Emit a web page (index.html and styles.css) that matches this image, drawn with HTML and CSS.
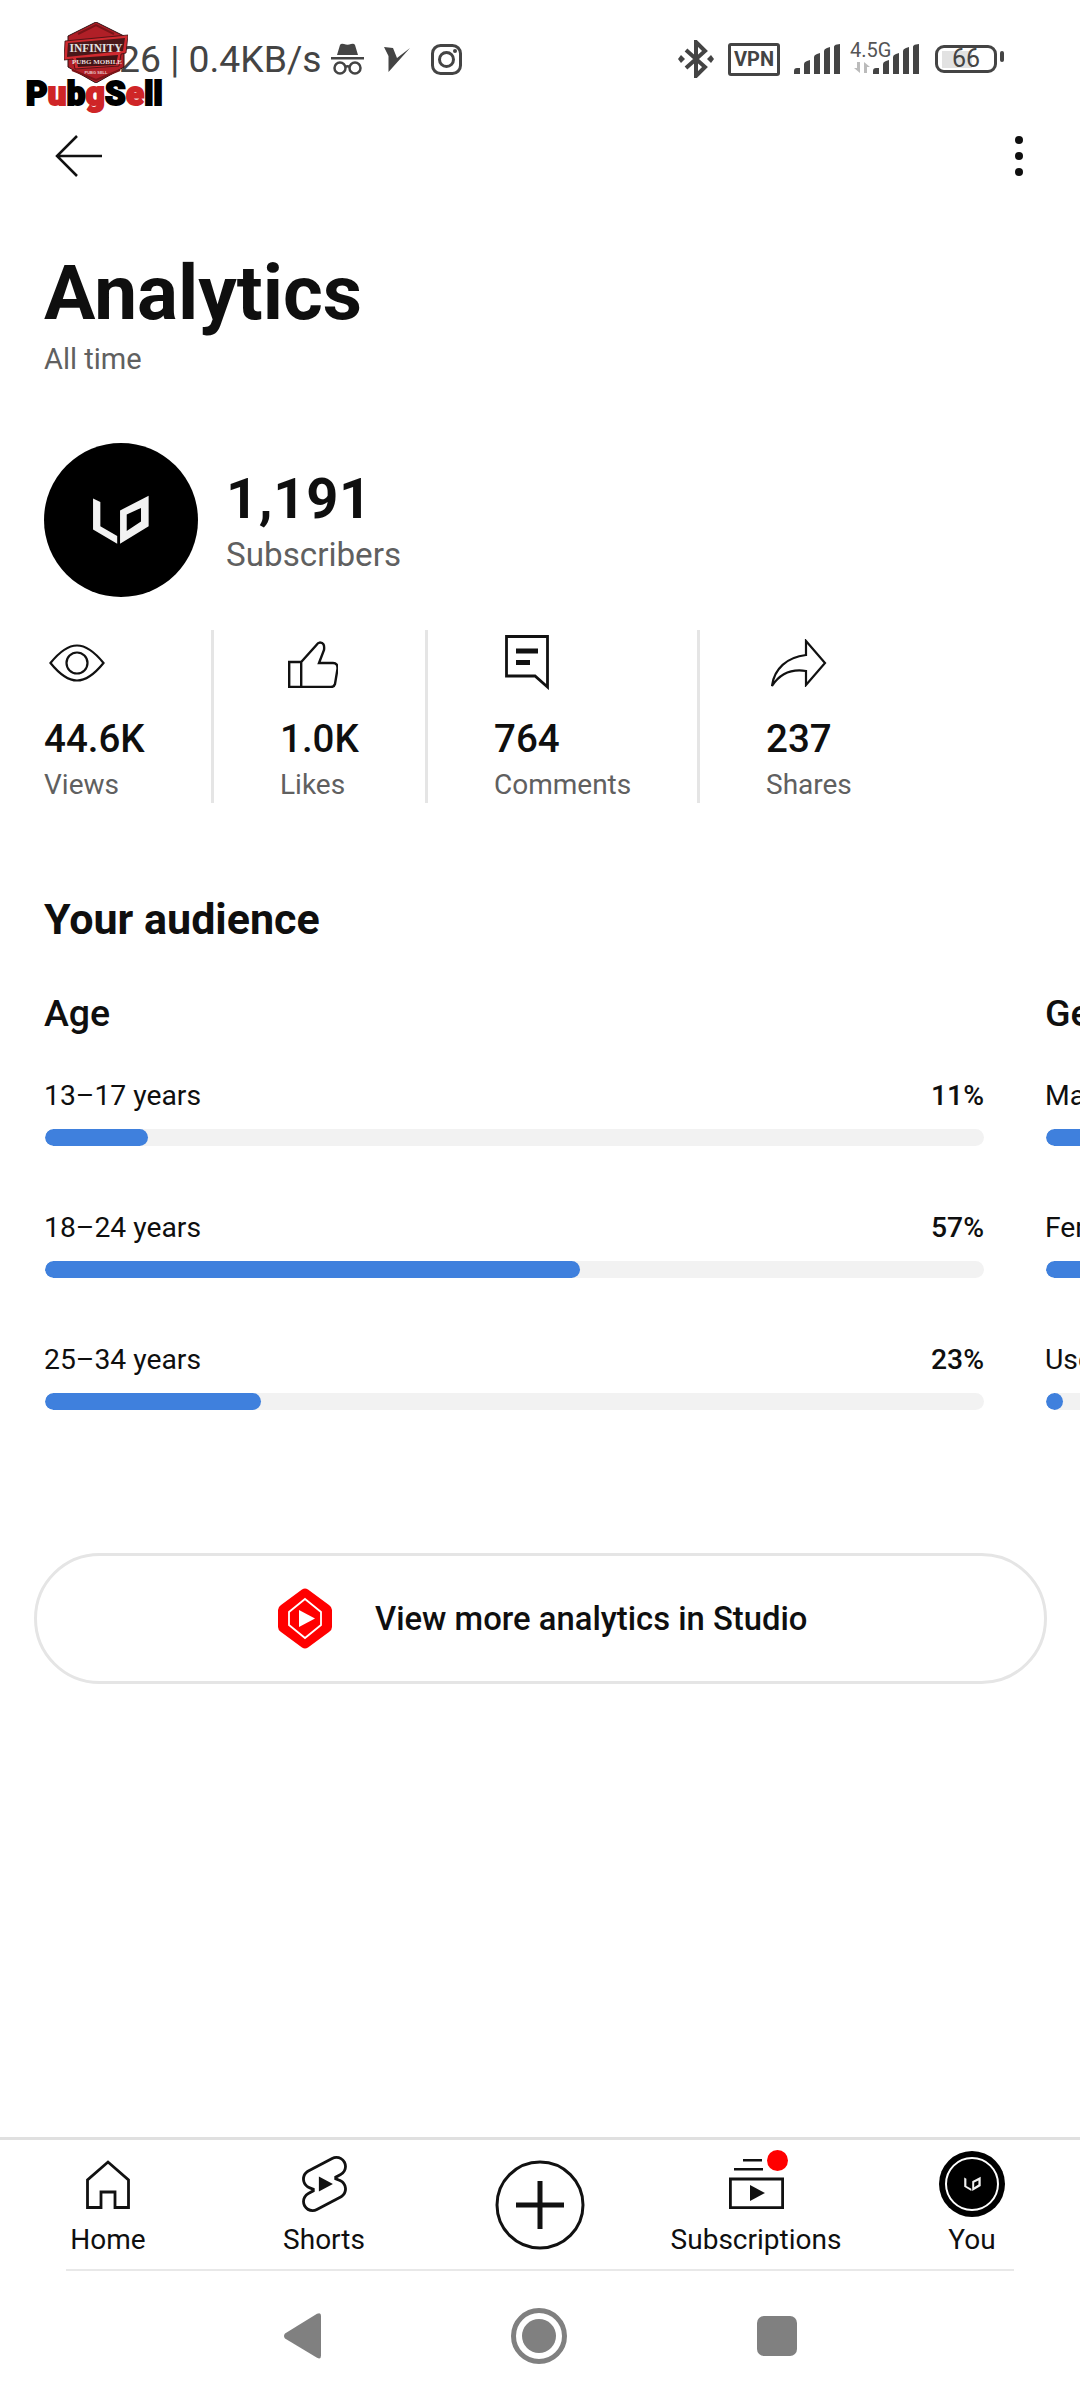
FILE: index.html
```html
<!DOCTYPE html>
<html lang="en">
<head>
<meta charset="utf-8">
<title>Analytics</title>
<link rel="stylesheet" href="styles.css">
</head>
<body>
<svg class="defs" width="0" height="0" aria-hidden="true">
  <symbol id="lo" viewBox="270 215 200 170">
    <path fill="#f2f2f2" fill-rule="evenodd" d="M282 232l23 11v77l53 30v25l-76-45zM457 224v96l-90 55V270zM433 262l-45 21v52l45-30z"/>
  </symbol>
  <symbol id="bars" viewBox="0 0 48 30">
    <path d="M0 30v-3q0-3 3-3h3v6zM10 30V20q0-2 3-3l3-1v14zM20 30V13q0-2 3-3l3-1v21zM30 30V7q0-2 3-3l3-1v27zM40 30V3q0-2 3-2.500l3-.5v30z" fill="#444"/>
  </symbol>
</svg>

<div class="watermark">
  <svg class="wm-hex" viewBox="0 0 64 61" width="64" height="61">
    <polygon points="32,0 60,14 60,45 32,61 4,45 4,14" fill="#b01f27" stroke="#2e1012"/>
    <path d="M14 12L32 3l18 9M8 48l24 10 24-10" fill="none" stroke="#7a1418" stroke-width="2"/>
    <polygon points="1,19 64,13 62,31 57,32 55,44 11,47 9,37 0,38" fill="#d02a30" stroke="#3a1012" stroke-width=".8"/>
    <polygon points="4,21 61,16 59,29 3,35" fill="#4a1719"/>
    <polygon points="12,36 54,33 52,43 14,45" fill="#421315"/>
    <text class="wm-title" x="32" y="30" text-anchor="middle">INFINITY</text>
    <text class="wm-sub" x="33" y="42" text-anchor="middle">PUBG MOBILE</text>
    <text class="wm-tiny" x="32" y="52" text-anchor="middle">PUBG SELL</text>
  </svg>
  <div class="wm-name"><span>P</span><span class="wm-red">u</span><span>b</span><span class="wm-red">g</span><span>S</span><span class="wm-red">e</span><span>ll</span></div>
</div>

<header class="status">
  <span class="status-text">26 | 0.4KB/s</span>
  <svg class="st-incog" width="33" height="32" viewBox="0 0 33 32"><path fill="#444" d="M6 12L9 2q1-2 4-1 3.500 1.500 7 0 3-1 4 1l3 10z"/><rect y="14" width="33" height="2.500" fill="#444"/><g fill="none" stroke="#444" stroke-width="2.500"><circle cx="9" cy="25" r="5.500"/><circle cx="24" cy="25" r="5.500"/><path d="M14 24q2.500-1.500 5 0"/></g></svg>
  <svg class="st-v" width="26" height="25" viewBox="0 0 26 25"><path fill="#444" d="M0 0l9 1 4 10L26 1 4.500 25V9z"/></svg>
  <svg class="st-ig" width="31" height="31" viewBox="0 0 31 31"><g fill="none" stroke="#444" stroke-width="3"><rect x="1.500" y="1.500" width="28" height="28" rx="8"/><circle cx="15.500" cy="15.500" r="7"/></g><circle cx="24" cy="7" r="2" fill="#444"/></svg>
  <div class="status-right">
    <svg width="36" height="38" viewBox="0 0 36 38"><path fill="none" stroke="#444" stroke-width="4" d="M8 10l19 17-9 9V2l9 9L8 28"/><path fill="#444" d="M3 15l4 4-4 4-3-4zM33 15l3 4-3 4-4-4z"/></svg>
    <span class="vpn">VPN</span>
    <svg class="signal" width="48" height="30"><use href="#bars"/></svg>
    <div class="net">
      <span class="net-label">4.5G</span>
      <svg class="net-arrows" width="16" height="11" viewBox="0 0 16 11"><path fill="#bbb" d="M3 0h3v11L0 6h3zM10 0l6 5h-3v6h-3z"/></svg>
      <svg class="signal" width="48" height="30"><use href="#bars"/></svg>
    </div>
    <span class="battery">66</span>
  </div>
</header>

<div class="toolbar">
  <svg width="47" height="42" viewBox="0 0 47 42"><path fill="none" stroke="#111" stroke-width="2.500" d="M47 21H2M22 1L2 21l20 20"/></svg>
  <div class="kebab"><i></i><i></i><i></i></div>
</div>

<main class="main">
  <h1 class="title">Analytics</h1>
  <p class="range">All time</p>

  <section class="channel">
    <div class="avatar"><svg width="64" height="54"><use href="#lo"/></svg></div>
    <div class="subs">
      <div class="subs-count">1,191</div>
      <div class="subs-label">Subscribers</div>
    </div>
  </section>

  <section class="stats">
    <div class="stat">
      <div class="stat-icon"><svg class="i-eye" width="56" height="38" viewBox="0 0 56 38"><path fill="none" stroke="#111" stroke-width="2.200" d="M1.500 19C12 6 20 1.500 28 1.500S44 6 54.500 19C44 32 36 36.500 28 36.500S12 32 1.500 19z"/><circle cx="28" cy="19" r="10.500" fill="none" stroke="#111" stroke-width="2.200"/></svg></div>
      <div class="stat-num">44.6K</div>
      <div class="stat-label">Views</div>
    </div>
    <div class="stat">
      <div class="stat-icon"><svg class="i-thumb" width="50" height="47" viewBox="0 0 50 47"><path fill="none" stroke="#111" stroke-width="2.400" d="M1.200 21h12v25H1.200zM13.200 46H43q3 0 4-3l2.500-15q.5-6-4.500-6H31l5-13q1-7.500-4-7.500-2 0-4 3L13.200 21"/></svg></div>
      <div class="stat-num">1.0K</div>
      <div class="stat-label">Likes</div>
    </div>
    <div class="stat">
      <div class="stat-icon"><svg class="i-comment" width="44" height="55" viewBox="0 0 44 55"><path fill="none" stroke="#111" stroke-width="2.800" d="M1.500 1.500h41V52L30 41H1.500z"/><path fill="#111" d="M11 13.500h22v5H11zM11 25h14v5H11z"/></svg></div>
      <div class="stat-num">764</div>
      <div class="stat-label">Comments</div>
    </div>
    <div class="stat">
      <div class="stat-icon"><svg class="i-share" width="56" height="48" viewBox="0 0 56 48"><path fill="none" stroke="#111" stroke-width="2.200" d="M35 2l19 22-19 22V32C22 30 10 33 1 47 3 30 16 18 35 16z"/></svg></div>
      <div class="stat-num">237</div>
      <div class="stat-label">Shares</div>
    </div>
  </section>

  <h2 class="audience">Your audience</h2>

  <section class="carousel">
    <div class="col">
      <h3 class="col-title">Age</h3>
      <div class="row">
        <div class="row-head"><span>13–17 years</span><span class="pct">11%</span></div>
        <div class="track"><div class="fill" style="width:11%"></div></div>
      </div>
      <div class="row">
        <div class="row-head"><span>18–24 years</span><span class="pct">57%</span></div>
        <div class="track"><div class="fill" style="width:57%"></div></div>
      </div>
      <div class="row">
        <div class="row-head"><span>25–34 years</span><span class="pct">23%</span></div>
        <div class="track"><div class="fill" style="width:23%"></div></div>
      </div>
    </div>
    <div class="col">
      <h3 class="col-title">Gender</h3>
      <div class="row">
        <div class="row-head"><span>Male</span></div>
        <div class="track"><div class="fill" style="width:87%"></div></div>
      </div>
      <div class="row">
        <div class="row-head"><span>Female</span></div>
        <div class="track"><div class="fill" style="width:13%"></div></div>
      </div>
      <div class="row">
        <div class="row-head"><span>User-specified</span></div>
        <div class="track"><div class="fill" style="width:17px"></div></div>
      </div>
    </div>
  </section>

  <a class="studio">
    <svg width="54" height="61" viewBox="0 0 54 61"><path fill="#f00" d="M24 1.500q3-2 6 0L51 17q3 2 3 5v17q0 3-3 5L30 59.500q-3 2-6 0L3 44q-3-2-3-5V22q0-3 3-5z"/><path fill="none" stroke="#fff" stroke-width="1.800" d="M27 11l16 13v13L27 50 11 37V24z"/><path fill="#fff" d="M21 22l16 8.500L21 39z"/></svg>
    <span>View more analytics in Studio</span>
  </a>
</main>

<nav class="nav">
  <div class="nav-item">
    <div class="nav-icon"><svg width="44" height="49" viewBox="0 0 44 49"><path fill="none" stroke="#111" stroke-width="2.800" d="M1.500 47.500V20L22 2l20.500 18v27.500H29V32H15v15.500z"/></svg></div>
    <span class="nav-label">Home</span>
  </div>
  <div class="nav-item">
    <div class="nav-icon"><svg width="45" height="56" viewBox="4 2 16 20"><path fill="#111" d="M17.770 10.320c-.77-.32-1.200-.5-1.200-.5L18 9.060c1.840-.96 2.530-3.230 1.560-5.060s-3.240-2.530-5.070-1.560L6 6.940c-1.290.68-2.070 2.040-2 3.490.07 1.420.93 2.670 2.220 3.250.03.01 1.200.5 1.200.5L6 14.930c-1.830.97-2.530 3.240-1.560 5.070.97 1.830 3.240 2.530 5.070 1.560l8.500-4.500c1.290-.68 2.060-2.040 1.990-3.490-.07-1.420-.94-2.680-2.230-3.250zm-.23 5.860l-8.500 4.500c-1.340.71-3.010.2-3.720-1.140-.71-1.340-.2-3.010 1.140-3.720l2.040-1.080v-1.210l-.69-.28-1.110-.46c-.99-.41-1.650-1.350-1.700-2.410-.05-1.060.52-2.060 1.460-2.560l8.500-4.500c1.340-.71 3.010-.2 3.720 1.140.71 1.340.2 3.010-1.140 3.720L15.500 9.260v1.210l1.800.74c.99.41 1.650 1.350 1.700 2.410.05 1.060-.52 2.060-1.460 2.560z"/><path fill="#111" d="M10 14.650v-5.300L15 12z"/></svg></div>
    <span class="nav-label">Shorts</span>
  </div>
  <div class="nav-item">
    <svg class="create" width="90" height="90" viewBox="0 0 90 90"><circle cx="45" cy="45" r="43" fill="none" stroke="#111" stroke-width="3"/><path stroke="#111" stroke-width="5" d="M21 45h48M45 21v48"/></svg>
  </div>
  <div class="nav-item">
    <div class="nav-icon has-dot"><svg width="55" height="50" viewBox="0 0 55 50"><path fill="#111" d="M14 0h19v2.500H14zM5 9h29v2.500H5z"/><path fill="none" stroke="#111" stroke-width="2.800" d="M1.400 20h52.200v28.600H1.400z"/><path fill="#111" d="M21 26l15 8-15 8z"/></svg><span class="dot"></span></div>
    <span class="nav-label">Subscriptions</span>
  </div>
  <div class="nav-item">
    <div class="nav-icon"><div class="you"><svg width="19" height="16"><use href="#lo"/></svg></div></div>
    <span class="nav-label">You</span>
  </div>
</nav>
<div class="nav-rule"></div>

<div class="sysnav">
  <svg width="37" height="46" viewBox="0 0 37 46"><path fill="#808080" d="M33 .8q4-2 4 2v40q0 4-4 2L1 25.500q-2-2.500 0-5z"/></svg>
  <svg width="56" height="56" viewBox="0 0 56 56"><circle cx="28" cy="28" r="25.500" fill="none" stroke="#808080" stroke-width="5"/><circle cx="28" cy="28" r="17" fill="#808080"/></svg>
  <span class="sys-square"></span>
</div>
</body>
</html>
```
FILE: styles.css
```css
* { box-sizing: border-box; }
html, body { margin: 0; padding: 0; }
body {
  width: 1080px;
  height: 2400px;
  overflow: hidden;
  position: relative;
  display: flex;
  flex-direction: column;
  background: #fff;
  color: #0f0f0f;
  font-family: Roboto, "Liberation Sans", sans-serif;
}
svg { display: block; flex: none; }
.defs { position: absolute; }

/* watermark overlay */
.watermark { position: absolute; left: 26px; top: 22px; width: 140px; z-index: 2; }
.wm-hex { margin-left: 38px; }
.wm-title { font: 700 11.500px "Liberation Serif", serif; fill: #e2e2e2; }
.wm-sub { font: 700 7px "Liberation Serif", serif; fill: #e8d8d8; }
.wm-tiny { font: 700 4px "Liberation Sans", sans-serif; fill: #e8c8c8; }
.wm-name {
  margin-top: -10px;
  font: 900 33px/42px Roboto, sans-serif;
  letter-spacing: .3px;
  color: #000;
  -webkit-text-stroke: 2px currentColor;
  white-space: nowrap;
}
.wm-red { color: #cf2527; }

/* status bar */
.status {
  height: 118px;
  flex: none;
  display: flex;
  align-items: center;
  padding: 0 83px 0 119px;
  color: #444;
}
.status-text { font-size: 37.300px; white-space: nowrap; margin-right: 9px; }
.st-v { margin-left: 20px; }
.st-ig { margin-left: 21px; }
.status-right { margin-left: auto; display: flex; align-items: center; gap: 14px; }
.vpn {
  width: 52px; height: 33px;
  border: 3px solid #444;
  border-radius: 3px;
  font-size: 20px; font-weight: 700;
  line-height: 27px;
  text-align: center;
  color: #444;
}
.net { position: relative; width: 71px; padding-left: 23px; margin-left: -6px; }
.net-label { position: absolute; left: 0; top: -4px; font-size: 20px; line-height: 20px; color: #555; }
.net-arrows { position: absolute; left: 4px; bottom: 1px; }
.battery {
  position: relative;
  width: 62px; height: 28px;
  border: 3px solid #444;
  border-radius: 9px;
  font-size: 25px; line-height: 22px;
  text-align: center;
  color: #444;
  background: linear-gradient(#e2e2e2, #e2e2e2) no-repeat 4px center / 30px 17px;
}
.battery::after {
  content: "";
  position: absolute;
  right: -10px; top: 3px;
  width: 4px; height: 11px;
  border-radius: 2px;
  background: #444;
}

/* toolbar */
.toolbar {
  height: 76px;
  flex: none;
  display: flex;
  align-items: center;
  justify-content: space-between;
  padding: 0 57px 0 55px;
}
.kebab { display: flex; flex-direction: column; gap: 8px; }
.kebab i { width: 8px; height: 8px; border-radius: 50%; background: #0f0f0f; }

/* content */
.main { flex: 1; min-height: 0; }
.title { margin: 57px 0 0 44px; font-size: 76.500px; line-height: 84px; font-weight: 700; }
.range { margin: 6px 0 0 44px; font-size: 29px; line-height: 36px; color: #606060; }
.channel { margin: 65.500px 0 0 44px; display: flex; align-items: center; gap: 28px; }
.avatar {
  width: 154px; height: 154px;
  border-radius: 50%;
  background: #000;
  display: flex; align-items: center; justify-content: center;
}
.subs { padding-top: 6px; }
.subs-count { font-size: 56px; line-height: 62px; font-weight: 700; letter-spacing: .7px; }
.subs-label { font-size: 33.200px; line-height: 44px; color: #606060; margin-top: 3px; }

.stats {
  margin: 33px 0 0 44px;
  display: grid;
  grid-template-columns: 170px 214px 272px auto;
  height: 173px;
}
.stat { padding-left: 66px; border-right: 3px solid #e5e5e5; }
.stat:first-child { padding-left: 0; }
.stat:last-child { border-right: 0; }
.stat-icon { height: 87px; position: relative; }
.i-eye { position: absolute; left: 5px; top: 14px; }
.i-thumb { position: absolute; left: 8px; top: 11px; }
.i-comment { position: absolute; left: 11px; top: 5px; }
.i-share { position: absolute; left: 5px; top: 9px; }
.stat-num { font-size: 38.500px; line-height: 44px; font-weight: 500; white-space: nowrap; }
.stat-label { font-size: 28px; line-height: 36px; color: #606060; margin-top: 6.500px; white-space: nowrap; }

.audience { margin: 90px 0 0 44px; font-size: 43px; line-height: 52px; font-weight: 700; }

.carousel { margin-top: 46px; padding-left: 45px; display: flex; gap: 62px; width: 2400px; }
.col { width: 939px; flex: none; }
.col-title { margin: 0 0 0 -1px; font-size: 37.500px; line-height: 44px; font-weight: 500; }
.row { margin-top: 63px; }
.col-title + .row { margin-top: 42px; }
.row-head {
  display: flex;
  justify-content: space-between;
  margin-left: -1px;
  font-size: 28.300px;
  line-height: 36px;
  color: #0f0f0f;
  position: relative;
  top: 1px;
}
.pct { font-weight: 500; }
.track {
  margin-top: 16px;
  height: 17px;
  border-radius: 9px;
  background: #f2f2f2;
  overflow: hidden;
}
.fill { height: 100%; border-radius: 9px; background: #3f80dd; }

.studio {
  margin: 143px 0 0 34px;
  width: 1013px;
  height: 131px;
  border: 3px solid #e5e5e5;
  border-radius: 66px;
  display: flex;
  align-items: center;
  padding-left: 241px;
  gap: 43px;
  font-size: 32.800px;
  font-weight: 500;
  color: #0f0f0f;
}
.studio span { position: relative; top: 1px; }

/* bottom nav */
.nav {
  flex: none;
  height: 132px;
  border-top: 3px solid #e0e0e0;
  display: grid;
  grid-template-columns: repeat(5, 216px);
}
.nav-item { display: flex; flex-direction: column; align-items: center; justify-content: flex-start; }
.nav-icon {
  position: relative;
  height: 82px;
  padding-top: 6px;
  display: flex;
  align-items: center;
  justify-content: center;
}
.nav-label { font-size: 28px; line-height: 36px; color: #0f0f0f; white-space: nowrap; }
.create { margin-top: 20px; }
.dot {
  position: absolute;
  right: -4px; top: 10px;
  width: 21px; height: 21px;
  border-radius: 50%;
  background: #f00;
}
.you {
  width: 66px; height: 66px;
  border-radius: 50%;
  background: #000;
  display: flex; align-items: center; justify-content: center;
  position: relative;
}
.you::after {
  content: "";
  position: absolute;
  inset: 6px;
  border: 2px solid #fff;
  border-radius: 50%;
}
.nav-rule { flex: none; height: 2px; margin: 0 66px; background: #e8e8e8; }

/* system nav */
.sysnav {
  flex: none;
  height: 129px;
  display: flex;
  align-items: center;
  padding-left: 284px;
  gap: 190px;
}
.sys-square { width: 40px; height: 40px; border-radius: 7px; background: #808080; }
```
